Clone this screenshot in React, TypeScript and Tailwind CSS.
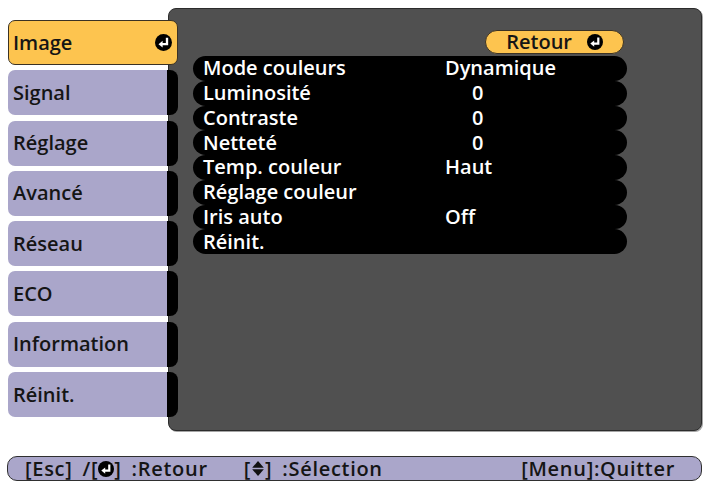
const EnterIcon = ({ size = 17 }: { size?: number }) => (
	<svg width={size} height={size} viewBox="0 0 16 16" className="shrink-0">
		<circle cx="8" cy="8" r="8" fill="#000" />
		<path d="M11.3 3.6 V9.6 H6.5" stroke="#fff" strokeWidth="2.2" fill="none" />
		<polygon points="3.3,9.6 7.2,6.4 7.2,12.8" fill="#fff" />
	</svg>
)

const UpDown = () => (
	<svg width="14" height="17" viewBox="0 0 13 16" className="shrink-0">
		<polygon points="6.5,1 12,7.3 1,7.3" fill="#111" />
		<polygon points="1,8.7 12,8.7 6.5,15" fill="#111" />
	</svg>
)

const tabs = ["Image", "Signal", "Réglage", "Avancé", "Réseau", "ECO", "Information", "Réinit."]

const rows = [
	{ label: "Mode couleurs", value: "Dynamique" },
	{ label: "Luminosité", value: "0", num: true },
	{ label: "Contraste", value: "0", num: true },
	{ label: "Netteté", value: "0", num: true },
	{ label: "Temp. couleur", value: "Haut" },
	{ label: "Réglage couleur", value: "" },
	{ label: "Iris auto", value: "Off" },
	{ label: "Réinit.", value: "" },
]

export default function App() {
	return (
		<div className="w-[709px] h-[482px] bg-white font-['Open_Sans',sans-serif] font-semibold flex flex-col overflow-hidden">
			<div className="flex pt-[8px] pl-[8px] h-[431px]">
				{/* menu tabs */}
				<div className="relative z-10 w-[171px] flex flex-col gap-[5.3px] pt-[12px]">
					{tabs.map((t, i) =>
						i == 0 ? (
							<div
								key={t}
								className="h-[45px] w-[170px] bg-[#fdc44f] border border-[#3b3224] rounded-[7px] flex items-center justify-between pl-[4px] pr-[5px] text-[20px] text-[#151515]"
							>
								<span>{t}</span>
								<EnterIcon />
							</div>
						) : (
							<div key={t} className="h-[45px] flex">
								<div className="w-[159px] bg-[#aaa6ca] rounded-l-[7px] flex items-center pl-[5px] text-[20px] text-[#151515]">
									{t}
								</div>
								<div className="w-[11px] bg-black rounded-r-[8px]" />
							</div>
						)
					)}
				</div>

				{/* panel */}
				<div className="-ml-[11px] w-[534px] h-[423px] bg-[#505050] rounded-[8px] border border-[#2c2c2c] shadow-[1px_1px_0_#a5a5a5] flex flex-col pt-[21px]">
					<div className="flex justify-end pr-[77px]">
						<div className="w-[139px] h-[24px] bg-[#fdc44f] border border-[#3b3224] rounded-full flex items-center justify-end pr-[20px] gap-[15px] text-[20px] text-[#151515] leading-none">
							<span>Retour</span>
							<EnterIcon size={16} />
						</div>
					</div>
					<div className="ml-[24px] w-[434px] mt-[2px] flex flex-col">
						{rows.map(r => (
							<div
								key={r.label}
								className="h-[24.75px] bg-black rounded-full flex items-center pl-[10px] text-white text-[20px] leading-none"
							>
								<span className="w-[242px]">{r.label}</span>
								<span className={r.num ? "pl-[27px]" : ""}>{r.value}</span>
							</div>
						))}
					</div>
				</div>
			</div>

			{/* help bar */}
			<div className="mt-[25px] ml-[7px] w-[695px] h-[25px] bg-[#aaa6ca] border border-[#2f2f2f] rounded-[10px] flex items-center justify-between pl-[17px] pr-[26px] text-[20px] tracking-[0.7px] text-[#151515] leading-none">
				<div className="flex items-center">
					<span>[Esc]</span>
					<span className="ml-[10px]">/[</span>
					<EnterIcon size={16} />
					<span>]</span>
					<span className="ml-[10px]">:Retour</span>
					<span className="ml-[36px]">[</span>
					<UpDown />
					<span>]</span>
					<span className="ml-[10px]">:Sélection</span>
				</div>
				<span>[Menu]:Quitter</span>
			</div>
		</div>
	)
}
